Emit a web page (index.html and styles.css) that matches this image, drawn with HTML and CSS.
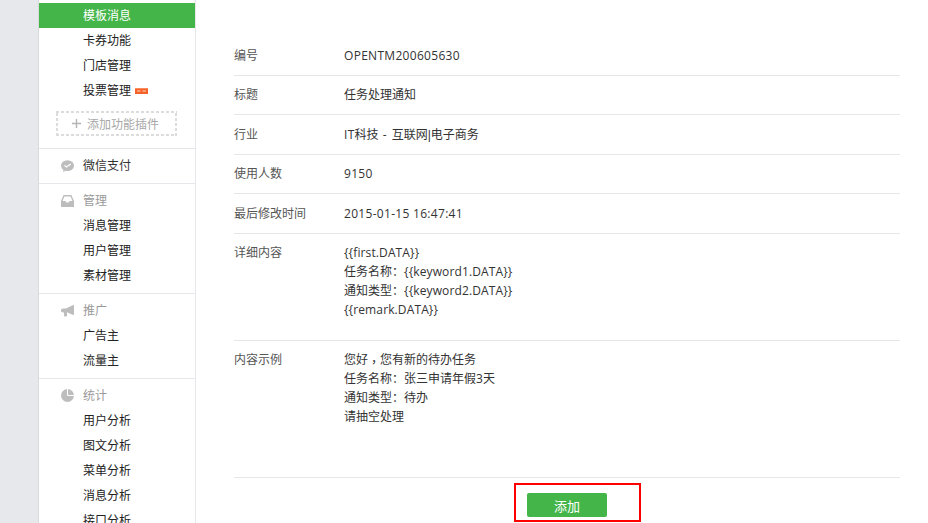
FILE: index.html
```html
<!DOCTYPE html>
<html lang="zh">
<head>
<meta charset="utf-8">
<title>模板消息</title>
<link rel="stylesheet" href="styles.css">
</head>
<body>
<div class="page">
  <div class="gutter"></div>
  <nav class="side">
    <a class="item active">模板消息</a>
    <a class="item">卡券功能</a>
    <a class="item">门店管理</a>
    <a class="item">投票管理<svg class="new" width="13" height="6" viewBox="0 0 13 6"><rect width="13" height="6" fill="#f4622a"/><rect width="13" height="1" fill="#fb8a5c"/><path d="M2 3h3.5M7.5 3H11" stroke="#fbb08f" stroke-width="1.4"/></svg></a>
    <div class="add-wrap"><div class="add"><svg class="plus" width="9" height="9" viewBox="0 0 9 9"><path d="M4.5 0v9M0 4.5h9" stroke="#b4b4b4" stroke-width="1.4"/></svg>添加功能插件</div></div>
    <section class="group">
      <h3 class="head"><svg class="ico" width="13" height="12" viewBox="0 0 13 12"><ellipse cx="6.5" cy="5.6" rx="6.5" ry="5.4" fill="#bdbdbd"/><path d="M2.5 10l-.5 2 3-1.2z" fill="#bdbdbd"/><path d="M3.4 5.4l2 1.6 4.4-3" fill="none" stroke="#fff" stroke-width="1.2"/></svg><span class="dark">微信支付</span></h3>
    </section>
    <section class="group">
      <h3 class="head"><svg class="ico" width="13" height="12" viewBox="0 0 13 12"><path d="M2.6 0h7.8L13 6v6H0V6z" fill="#bdbdbd"/><path d="M3.4 1.4h6.2L11.4 6H8.6L7.6 7.6H5.4L4.4 6H1.6z" fill="#fff"/></svg>管理</h3>
      <a class="item">消息管理</a>
      <a class="item">用户管理</a>
      <a class="item">素材管理</a>
    </section>
    <section class="group">
      <h3 class="head"><svg class="ico" width="13" height="12" viewBox="0 0 13 12"><path d="M0 4.5L2 3.4h3L11 .4 13 0v10l-2-.4-5-2.4v3.6l-.8.8H3.6l-.6-1V7.4H2L0 6.4z" fill="#bdbdbd"/></svg>推广</h3>
      <a class="item">广告主</a>
      <a class="item">流量主</a>
    </section>
    <section class="group">
      <h3 class="head"><svg class="ico" width="13" height="13" viewBox="0 0 13 13"><circle cx="6.5" cy="6.5" r="6.5" fill="#bdbdbd"/><path d="M6.5 0v6.5H13" fill="none" stroke="#fff" stroke-width="1"/></svg>统计</h3>
      <a class="item">用户分析</a>
      <a class="item">图文分析</a>
      <a class="item">菜单分析</a>
      <a class="item">消息分析</a>
      <a class="item">接口分析</a>
    </section>
  </nav>
  <main class="main">
    <dl class="row"><dt class="label">编号</dt><dd class="value"><span class="latin">OPENTM200605630</span></dd></dl>
    <dl class="row"><dt class="label">标题</dt><dd class="value">任务处理通知</dd></dl>
    <dl class="row"><dt class="label">行业</dt><dd class="value"><span class="latin">IT</span>科技<span class="sep"> - </span>互联网<span class="pipe">|</span>电子商务</dd></dl>
    <dl class="row"><dt class="label">使用人数</dt><dd class="value"><span class="latin">9150</span></dd></dl>
    <dl class="row"><dt class="label">最后修改时间</dt><dd class="value"><span class="latin">2015-01-15 16:47:41</span></dd></dl>
    <dl class="row detail"><dt class="label">详细内容</dt><dd class="value"><span class="tpl">{{first.DATA}}</span><br>任务名称<span class="colon">：</span><span class="tpl">{{keyword1.DATA}}</span><br>通知类型<span class="colon">：</span><span class="tpl">{{keyword2.DATA}}</span><br><span class="tpl">{{remark.DATA}}</span></dd></dl>
    <dl class="row example"><dt class="label">内容示例</dt><dd class="value">您好<span class="comma">，</span>您有新的待办任务<br>任务名称<span class="colon">：</span>张三申请年假3天<br>通知类型<span class="colon">：</span>待办<br>请抽空处理</dd></dl>
    <div class="actions"><button class="btn">添加</button><div class="hilite"></div></div>
  </main>
</div>
</body>
</html>
```
FILE: styles.css
```css
html, body {
  margin: 0;
  height: 523px;
  overflow: hidden;
  background: #fff;
}
body {
  font-family: "Open Sans", "Noto Sans CJK SC", sans-serif;
  font-size: 12px;
  color: #333;
}
.page {
  display: flex;
  height: 523px;
  overflow: hidden;
}
.gutter {
  width: 38px;
  flex: none;
  background: #e7e8eb;
}
.side {
  width: 156px;
  flex: none;
  border-left: 1px solid #d9dadc;
  border-right: 1px solid #e7e7eb;
  padding-top: 3px;
}
.item {
  display: flex;
  align-items: center;
  height: 25px;
  padding-left: 44px;
  color: #222;
  line-height: 25px;
}
.active {
  background: #44b549;
  color: #fff;
}
.new { margin-left: 4px; }
.add-wrap {
  padding: 8px 18px 12px 17px;
}
.add {
  display: flex;
  align-items: center;
  justify-content: center;
  height: 25px;
  padding-right: 2px;
  color: #a8a8a8;
  background:
    repeating-linear-gradient(90deg, #dcdcdc 0 3px, transparent 3px 5px) top / 100% 2px no-repeat,
    repeating-linear-gradient(90deg, #dcdcdc 0 3px, transparent 3px 5px) bottom / 100% 2px no-repeat,
    repeating-linear-gradient(0deg, #dcdcdc 0 3px, transparent 3px 5px) left / 2px 100% no-repeat,
    repeating-linear-gradient(0deg, #dcdcdc 0 3px, transparent 3px 5px) right / 2px 100% no-repeat;
}
.plus { margin-right: 6px; }
.group {
  border-top: 1px solid #e7e7eb;
  padding: 4px 0 5px;
}
.head {
  display: flex;
  align-items: center;
  height: 25px;
  margin: 0;
  padding-left: 22px;
  font-size: 12px;
  font-weight: normal;
  color: #9a9a9a;
  line-height: 25px;
}
.dark { color: #333; }
.ico {
  width: 13px;
  margin-right: 9px;
  flex: none;
}
.main {
  flex: none;
  width: 666px;
  margin-left: 38px;
  padding-top: 36px;
}
.row {
  display: flex;
  margin: 0;
  height: 39px;
  border-bottom: 1px solid #e7e7eb;
  line-height: 19px;
  --pad: 10px;
}
.row:nth-of-type(even) {
  height: 38px;
  --pad: 9px;
}
.label {
  width: 110px;
  flex: none;
  padding-top: var(--pad);
  color: #555;
}
.value {
  margin: 0;
  padding-top: var(--pad);
  color: #333;
}
.latin { letter-spacing: 0.3px; }
.tpl { letter-spacing: 0.12px; }
.sep { letter-spacing: 1px; }
.pipe {
  font-family: "Liberation Sans", sans-serif;
  line-height: 0;
}
.colon {
  font-family: "Noto Sans CJK TC", sans-serif;
  line-height: 0;
}
.comma {
  display: inline-block;
  font-family: "Noto Sans CJK TC", sans-serif;
  line-height: 0;
  transform: translateY(3px);
}
.row.detail { height: 106px; --pad: 9px; }
.row.example { height: 136px; --pad: 9px; }
.actions {
  position: relative;
  display: flex;
  justify-content: center;
  padding-top: 15px;
}
.hilite {
  position: absolute;
  left: 280px;
  top: 5px;
  width: 123px;
  height: 35px;
  border: 2px solid #f00;
}
.btn {
  width: 80px;
  height: 24px;
  border: 0;
  border-radius: 2px;
  background: #44b549;
  color: #fff;
  font: inherit;
  font-size: 13px;
  padding: 0;
}
```
